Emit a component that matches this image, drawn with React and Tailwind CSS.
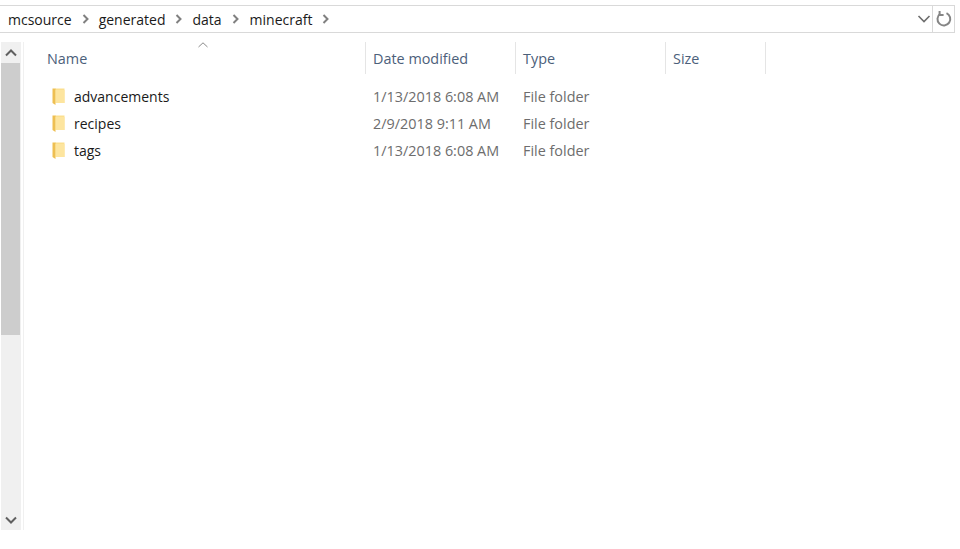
import React from "react";

const font = { fontFamily: '"Open Sans", "Noto Sans", sans-serif' };

function Chevron() {
  return (
    <svg width="8" height="10" viewBox="0 0 8 10" className="shrink-0">
      <path d="M1.5 1 L5.5 5 L1.5 9" fill="none" stroke="#808080" strokeWidth="2" />
    </svg>
  );
}

function Folder() {
  return (
    <svg width="13" height="18" viewBox="0 0 13 18" className="shrink-0">
      <path d="M3 0.5 H12.5 V15 H3 Z" fill="#fbdf8e" />
      <path d="M0.5 0.5 H3.5 V17 L0.5 15 Z" fill="#eebf52" />
      <path d="M3.5 2 H12.5 V15 H3.5 Z" fill="#fde59f" />
    </svg>
  );
}

const rows = [
  ["advancements", "1/13/2018 6:08 AM"],
  ["recipes", "2/9/2018 9:11 AM"],
  ["tags", "1/13/2018 6:08 AM"],
];

export default function App() {
  return (
    <div className="w-[960px] h-[549px] bg-white overflow-hidden flex flex-col pt-[5px] text-[14.4px]" style={font}>
      <div className="w-[955px] h-[28px] shrink-0 border-y border-r border-[#d9d9d9] flex items-center">
        <div className="flex-1 flex items-center pl-[8px] text-[#1a1a1a] text-[14px]">
          <span>mcsource</span>
          <span className="ml-[10px] mr-[9px]"><Chevron /></span>
          <span>generated</span>
          <span className="ml-[10px] mr-[9px]"><Chevron /></span>
          <span>data</span>
          <span className="ml-[10px] mr-[10px]"><Chevron /></span>
          <span>minecraft</span>
          <span className="ml-[10px]"><Chevron /></span>
        </div>
        <svg width="14" height="10" viewBox="0 0 14 10" className="mr-[1px]">
          <path d="M1.5 2 L7 7.5 L12.5 2" fill="none" stroke="#6e6e6e" strokeWidth="1.6" />
        </svg>
        <div className="w-[22px] h-full border-l border-[#d9d9d9] flex items-center justify-center">
          <svg width="16" height="18" viewBox="0 0 16 18">
            <path d="M10.5 3.2 A6.4 6.4 0 1 1 4.2 3.8" fill="none" stroke="#858585" strokeWidth="2" />
            <path d="M3.6 1 V5 H7.6" fill="none" stroke="#858585" strokeWidth="2" />
          </svg>
        </div>
      </div>

      <div className="flex mt-[9px] h-[488px]">
        <div className="ml-[1px] w-[20px] bg-[#f0f0f0] flex flex-col">
          <div className="h-[21px] flex items-center justify-center">
            <svg width="12" height="8" viewBox="0 0 12 8">
              <path d="M1 6.5 L6 1.5 L11 6.5" fill="none" stroke="#606060" strokeWidth="2" />
            </svg>
          </div>
          <div className="h-[272px] mr-[1px] bg-[#cdcdcd]" />
          <div className="flex-1" />
          <div className="h-[21px] flex items-center justify-center">
            <svg width="12" height="8" viewBox="0 0 12 8">
              <path d="M1 1.5 L6 6.5 L11 1.5" fill="none" stroke="#606060" strokeWidth="2" />
            </svg>
          </div>
        </div>
        <div className="ml-[2px] border-l border-[#f0f0f0] flex-1 relative">
          <svg width="10" height="6" viewBox="0 0 10 6" className="absolute left-[174px] top-0">
            <path d="M0.5 5 L5 0.8 L9.5 5" fill="none" stroke="#8a8a8a" strokeWidth="1" />
          </svg>
          <div className="flex h-[32px] text-[#4c607a]">
            <div className="w-[342px] border-r border-[#e5e5e5] pl-[23px] pt-[2px] flex items-center">Name</div>
            <div className="w-[150px] border-r border-[#e5e5e5] pl-[7px] pt-[2px] flex items-center">Date modified</div>
            <div className="w-[150px] border-r border-[#e5e5e5] pl-[7px] pt-[2px] flex items-center">Type</div>
            <div className="w-[100px] border-r border-[#e5e5e5] pl-[7px] pt-[2px] flex items-center">Size</div>
          </div>
          <div className="flex flex-col mt-[9px]">
            {rows.map(([name, date]) => (
              <div key={name} className="flex h-[27px] items-center">
                <div className="w-[342px] pl-[28px] flex items-center text-[#1a1a1a] text-[14px]">
                  <Folder />
                  <span className="ml-[9px]">{name}</span>
                </div>
                <div className="w-[150px] pl-[7px] text-[#6d6d6d]">{date}</div>
                <div className="w-[150px] pl-[7px] text-[#6d6d6d]">File folder</div>
              </div>
            ))}
          </div>
        </div>
      </div>
    </div>
  );
}
